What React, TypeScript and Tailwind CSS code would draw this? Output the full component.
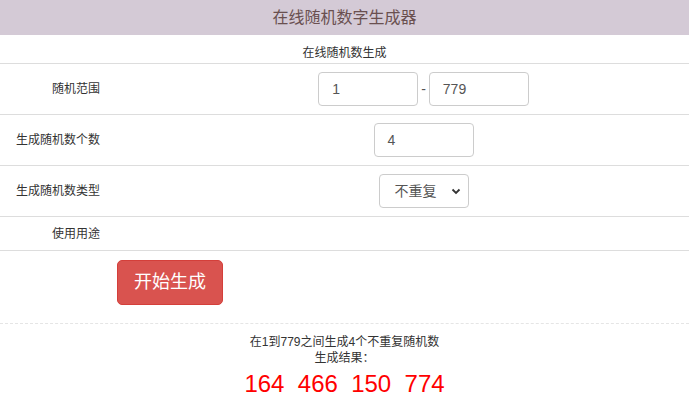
const font = { fontFamily: '"Liberation Sans", "Noto Sans CJK SC", sans-serif' };

function Row({ label, children, tall = true }: { label: string; children?: React.ReactNode; tall?: boolean }) {
  return (
    <div className={`grid grid-cols-[158px_1fr] items-center border-b border-[#ddd] ${tall ? "h-[51px]" : "h-[34px]"}`}>
      <div className="pr-[58px] text-right text-[12px] text-[#333]">{label}</div>
      <div className="flex items-center justify-center">{children}</div>
    </div>
  );
}

function Field({ value }: { value: string }) {
  return (
    <div className="flex h-[34px] w-[100px] items-center rounded border border-[#ccc] pl-[13px] text-[14px] text-[#555]">
      {value}
    </div>
  );
}

export default function App() {
  return (
    <div className="h-[396px] w-[689px] overflow-hidden bg-white" style={font}>
      <div className="flex h-[35px] items-center justify-center bg-[#d4cad6] text-[16px] text-[#6a5050]">
        在线随机数字生成器
      </div>
      <div className="flex h-[29px] items-end justify-center pb-[1px] text-[12px] text-[#333] border-b border-[#ddd]">
        在线随机数生成
      </div>
      <Row label="随机范围">
        <div className="flex items-center gap-[3px] text-[14px] text-[#555]">
          <Field value="1" />
          <span>-</span>
          <Field value="779" />
        </div>
      </Row>
      <Row label="生成随机数个数">
        <Field value="4" />
      </Row>
      <Row label="生成随机数类型">
        <div className="flex h-[34px] w-[90px] items-center justify-between rounded border border-[#ccc] pl-[15px] pr-[7px] text-[14px] text-[#555]">
          <span>不重复</span>
          <svg width="10" height="8" viewBox="0 0 10 8">
            <path d="M1.5 2.5 L5 6 L8.5 2.5" fill="none" stroke="#333" strokeWidth="1.8" />
          </svg>
        </div>
      </Row>
      <Row label="使用用途" tall={false} />
      <div className="h-[73px] border-b border-dashed border-[#e5e5e5] pt-[9px] pl-[117px]">
        <div className="flex h-[45px] w-[106px] items-center justify-center rounded-[5px] border border-[#d43f3a] bg-[#d9534f] text-[18px] text-white">
          开始生成
        </div>
      </div>
      <div className="flex flex-col items-center pt-[10px] text-[12px] text-[#333]">
        <div className="leading-[16px]">在1到779之间生成4个不重复随机数</div>
        <div className="leading-[16px]">生成结果：</div>
        <div className="mt-[3px] text-[24px] leading-[30px] text-[#ff0000]">
          164&nbsp;&nbsp;466&nbsp;&nbsp;150&nbsp;&nbsp;774
        </div>
      </div>
    </div>
  );
}
